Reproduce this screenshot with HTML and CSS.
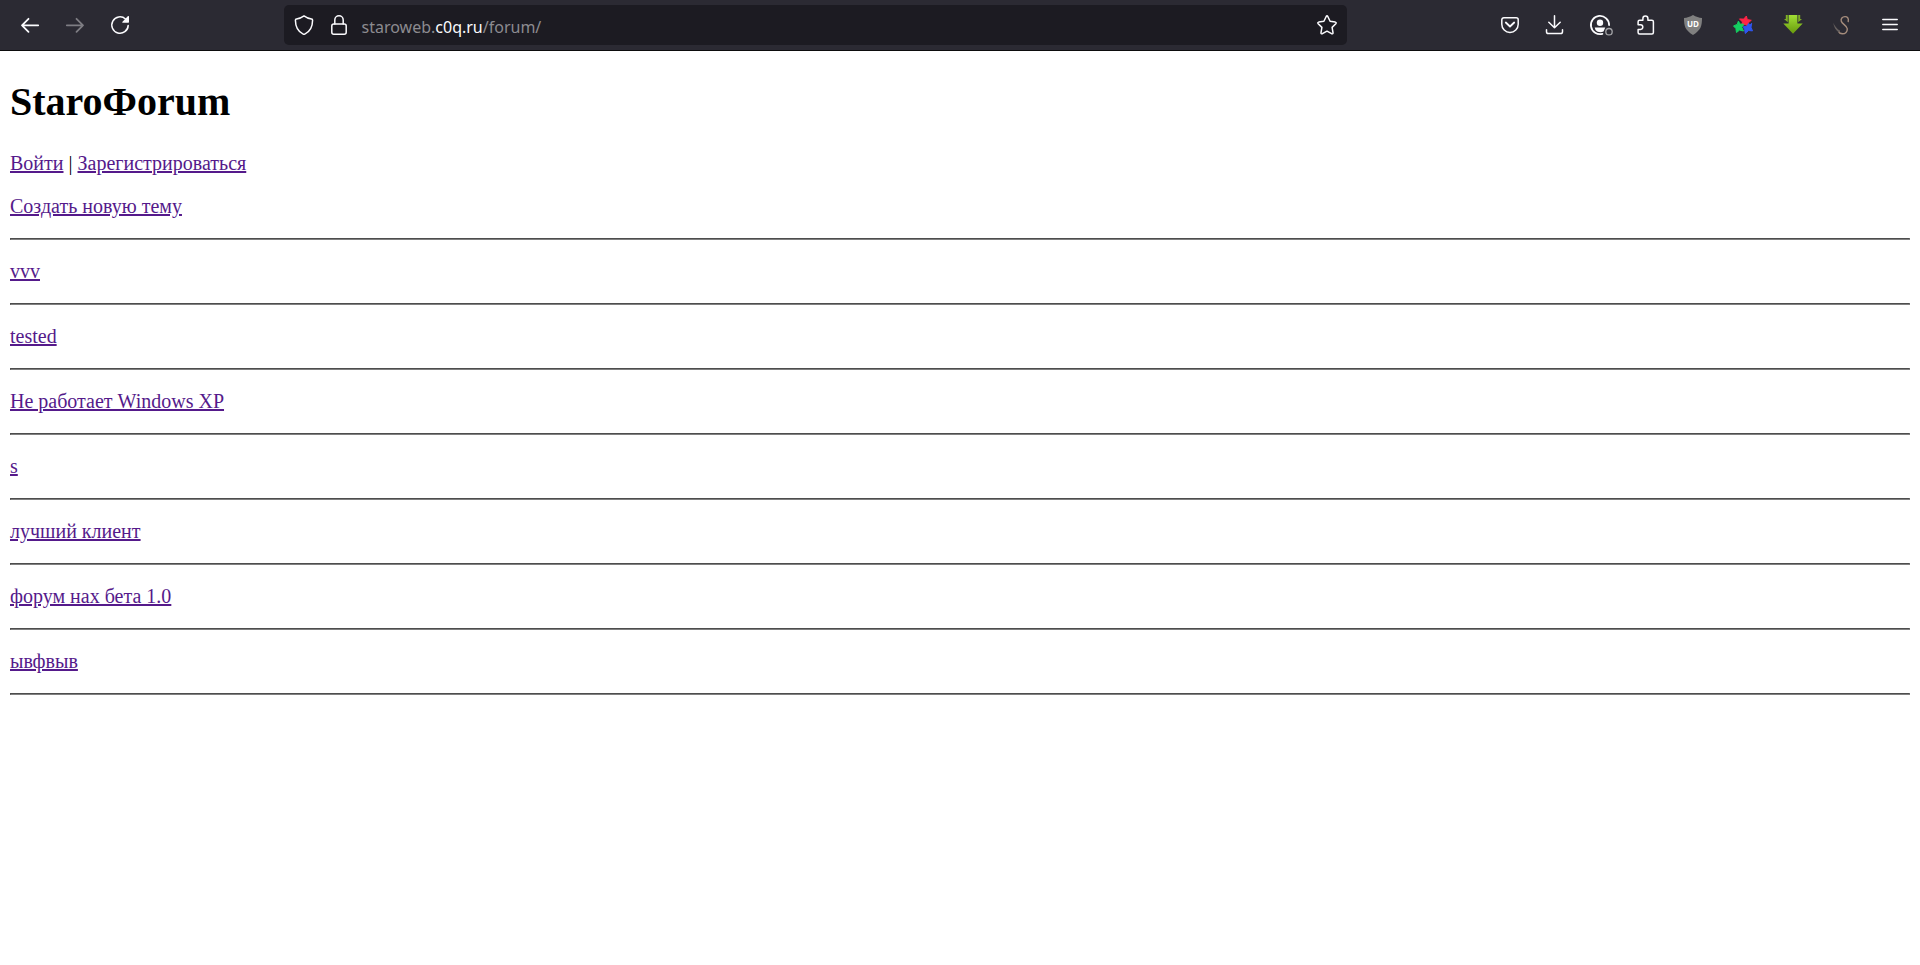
FILE: index.html
```html
<!DOCTYPE html>
<html lang="ru">
<head>
<meta charset="utf-8">
<title>StaroФorum</title>
<link rel="stylesheet" href="styles.css">
</head>
<body>
<header class="toolbar">
  <nav class="nav-group" aria-label="Navigation">
    <button class="tool" type="button" aria-label="Back">
      <svg class="icon" viewBox="0 0 20 20"><path class="line thick" d="M18.2 10.3H2M8.5 3.8L2 10.3l6.500 6.500"/></svg>
    </button>
    <button class="tool disabled" type="button" aria-label="Forward" disabled>
      <svg class="icon" viewBox="0 0 20 20"><path class="line thick" d="M1.800 10.300H18M11.500 3.800l6.500 6.500-6.500 6.500"/></svg>
    </button>
    <button class="tool" type="button" aria-label="Reload">
      <svg class="icon" viewBox="0 0 20 20"><path class="line" d="M18.200 10.400A8.200 8.200 0 1 1 15.500 4"/><path class="solid" d="M19 1.400v5.700a.6.6 0 0 1-.6.6h-5.500c-.6 0-.8-.6-.4-1l5.500-5.600c.4-.4 1-.2 1 .3z"/></svg>
    </button>
  </nav>
  <form class="urlbar">
    <svg class="icon" viewBox="0 0 20 20"><path class="line" d="M10 .9c2.600 1.900 5 2.900 7.500 3.200.7.1 1.100.5 1.100 1.200-.1 6.900-2.400 11.400-7.800 13.800q-.8.3-1.600 0C3.800 16.700 1.500 12.200 1.400 5.300c0-.7.400-1.100 1.100-1.200C5 3.800 7.400 2.800 10 .9z"/></svg>
    <svg class="icon lock" viewBox="0 0 20 20"><path class="line" d="M5.800 9V5a4.200 4.200 0 0 1 8.400 0v4"/><rect class="line" x="2.800" y="9" width="14.400" height="10.200" rx="2"/></svg>
    <a class="address" href="#">staroweb.<span class="domain">c0q.ru</span>/forum/</a>
    <button class="bookmark" type="button" aria-label="Bookmark">
      <svg class="icon" viewBox="0 0 20 20"><path class="line" d="M9.200 1.500q.8-1.300 1.600 0l2.300 4.800 5.200.8q1.500.4.5 1.600l-3.700 3.700.9 5.300q.1 1.600-1.400 1L10 16.200l-4.600 2.500q-1.500.6-1.400-1l.9-5.300-3.700-3.700q-1-1.200.5-1.600l5.200-.8z"/></svg>
    </button>
  </form>
  <div class="actions">
    <div class="nav-group">
      <button class="tool" type="button" aria-label="Pocket">
        <svg class="icon" viewBox="0 0 20 20"><path class="line" d="M3.800 2.800h12.400a2 2 0 0 1 2 2v4.400a8.200 8.200 0 0 1-16.400 0V4.800a2 2 0 0 1 2-2z"/><path class="line thick" d="M5.800 7.500L10 11.500l4.200-4"/></svg>
      </button>
      <button class="tool" type="button" aria-label="Downloads">
        <svg class="icon" viewBox="0 0 20 20"><path class="line" d="M9.500.8v12M3.800 7.200l5.700 5.600 5.700-5.600M1.500 14.800v2a1.800 1.800 0 0 0 1.800 1.800h12.400a1.800 1.800 0 0 0 1.800-1.800v-2"/></svg>
      </button>
      <button class="tool" type="button" aria-label="Account">
        <svg class="icon" viewBox="0 0 20 20"><path class="line thick" d="M12.400 18.800A9.100 9.100 0 1 1 19.100 10"/><circle class="solid" cx="10" cy="7.800" r="3.200"/><path class="solid" d="M4.700 12.500h10.600l-.8 1.800-1 2.300c-2.700 1.200-6 .8-8-1.500z"/><circle class="status" cx="19" cy="16.700" r="3.200"/></svg>
      </button>
      <button class="tool" type="button" aria-label="Extensions">
        <svg class="icon" viewBox="0 0 20 20"><path class="line" d="M4.600 19.100h12.300a1.500 1.500 0 0 0 1.500-1.500V6.700a1.500 1.500 0 0 0-1.500-1.500h-4V3.400a2.500 2.500 0 0 0-5 0v1.800h-3.300a1.500 1.500 0 0 0-1.500 1.500v3.100h2.400a2.300 2.300 0 0 1 0 4.600H3.100v3.200a1.500 1.500 0 0 0 1.500 1.500z"/></svg>
      </button>
    </div>
    <div class="extensions">
      <button class="tool extension" type="button" aria-label="Content blocker">
        <svg class="icon" viewBox="0 0 20 20"><path fill="#808080" d="M10 0c3 1.800 6 2.700 9 3 0 8-1 12-9 17C2 15 1 11 1 3c3-.3 6-1.200 9-3z"/><text class="badge-text" x="10" y="12">UD</text></svg>
      </button>
      <button class="tool extension" type="button" aria-label="Color stars">
        <svg class="icon" viewBox="0 0 20 20"><path class="star red" d="M13.400 1l.9 3.600 4 .7-3.100 2.500.3 3.200-3.500-1.500-3.500 1 1-3.500-3-3.100 4.200.2z"/><path class="star green" d="M5.400 6.100l1.600 3 3.800.1-2 3.100 1.700 3.700-3.900-.9-3.100 2.400-.6-3.900-2.400-2.700 3.700-1.500z"/><path class="star blue" d="M18.700 8.200l-.7 4 1.500 3.700-3.900-.4-3.300 3-.7-4-1.300-2.800 3.500-.4 1.800-2.900 1.200 1.700z"/></svg>
      </button>
      <button class="tool extension" type="button" aria-label="Download helper">
        <svg class="icon" viewBox="0 0 20 20"><defs><linearGradient id="leaf" x2="0" y2="1"><stop offset="0" stop-color="#a1df35"/><stop offset="1" stop-color="#67990d"/></linearGradient></defs><path fill="#7eaf25" d="M2.800 0h2v7.200L1 4h1.800zM17.200 0h-2v7.200L19 4h-1.800z"/><path fill="url(#leaf)" d="M5.600 0h8.800v8.500h5.300L10 18.700.3 8.500h5.300z"/></svg>
      </button>
      <button class="tool extension" type="button" aria-label="Style helper">
        <svg class="icon" viewBox="0 0 20 20"><path class="ornament" d="M15.200 6.500c.8-3.500-1-5-3.200-4.900-2.700.1-4.500 2.200-3.700 4.700.8 2.800 5.800 4.300 6 7.500.2 2.900-2 5-4.800 5-2.200 0-3.600-1.300-4-3"/><path fill="#66605f" d="M.3 7.800c1.500 3.300 3.500 6.200 6.800 8l-.8 1.900C2.700 15.700.8 12 .3 7.800z"/></svg>
      </button>
    </div>
    <button class="tool" type="button" aria-label="Menu">
      <svg class="icon" viewBox="0 0 20 20"><path class="line" d="M2.800 4.500h14.400M2.800 9.500h14.400M2.800 14.500h14.400"/></svg>
    </button>
  </div>
</header>
<main class="page">
  <h1 class="title">StaroФorum</h1>
  <p class="row"><a href="#">Войти</a> | <a href="#">Зарегистрироваться</a></p>
  <p class="row"><a href="#">Создать новую тему</a></p>
  <hr class="rule">
  <p class="row"><a href="#">vvv</a></p>
  <hr class="rule">
  <p class="row"><a href="#">tested</a></p>
  <hr class="rule">
  <p class="row"><a href="#">Не работает Windows XP</a></p>
  <hr class="rule">
  <p class="row"><a href="#">s</a></p>
  <hr class="rule">
  <p class="row"><a href="#">лучший клиент</a></p>
  <hr class="rule">
  <p class="row"><a href="#">форум нах бета 1.0</a></p>
  <hr class="rule">
  <p class="row"><a href="#">ывфвыв</a></p>
  <hr class="rule">
</main>
</body>
</html>
```
FILE: styles.css
```css
body {
  margin: 0;
  background: #fff;
  color: #000;
  font-family: "Liberation Serif", "Times New Roman", serif;
  font-size: 20px;
}

.toolbar {
  display: flex;
  align-items: center;
  justify-content: space-between;
  height: 50px;
  padding: 0 8px;
  border-bottom: 1px solid #0c0c0d;
  background: #2b2a33;
  color: #fbfbfe;
}

.nav-group {
  display: flex;
  gap: 1px;
}

.actions,
.extensions {
  display: flex;
}

.extensions {
  margin-left: 1px;
}

.tool,
.bookmark {
  display: flex;
  align-items: center;
  justify-content: center;
  width: 44px;
  height: 40px;
  padding: 0;
  border: 0;
  background: none;
  color: inherit;
}

.extension {
  width: 50px;
}

.disabled {
  color: #7e7d83;
}

.icon {
  flex: none;
  width: 20px;
  height: 20px;
  overflow: visible;
}

.line {
  fill: none;
  stroke: currentColor;
  stroke-width: 1.5;
  stroke-linecap: round;
  stroke-linejoin: round;
}

.thick {
  stroke-width: 1.8;
}

.solid {
  fill: currentColor;
}

.status {
  fill: #2b2a33;
  stroke: #a3a3a7;
  stroke-width: 1.3;
}

.star {
  stroke-width: 1;
  stroke-linejoin: round;
}

.red {
  fill: #ff2446;
  stroke: #ff2446;
}

.green {
  fill: #14cf61;
  stroke: #14cf61;
}

.blue {
  fill: #2f55ee;
  stroke: #2f55ee;
}

.badge-text {
  fill: #fff;
  font: bold 8px "Open Sans", sans-serif;
  text-anchor: middle;
}

.ornament {
  fill: none;
  stroke: #a58c7c;
  stroke-width: 1.4;
  stroke-linecap: round;
}

.urlbar {
  display: flex;
  align-items: center;
  flex: 0 1 1053px;
  height: 40px;
  padding-left: 10px;
  border-radius: 5px;
  background: #1c1b22;
}

.lock {
  margin-left: 15px;
}

.address {
  flex: 1;
  margin-left: 13px;
  padding-top: 4px;
  color: #8c8b90;
  font-family: "Noto Sans", sans-serif;
  font-size: 16px;
  line-height: 24px;
  text-decoration: none;
}

.domain {
  color: #fbfbfe;
}

.bookmark {
  width: 40px;
}

.page {
  padding: 28px 10px 10px;
}

.title {
  margin: 0 0 27px;
  font-size: 40px;
  line-height: 46px;
}

.row {
  margin: 20px 0;
  line-height: 23px;
}

.row a {
  color: #551a8b;
}

.rule {
  margin: 20px 0;
  border: 1px solid;
  border-color: #4d4d4d #808080 #808080 #4d4d4d;
}
```
